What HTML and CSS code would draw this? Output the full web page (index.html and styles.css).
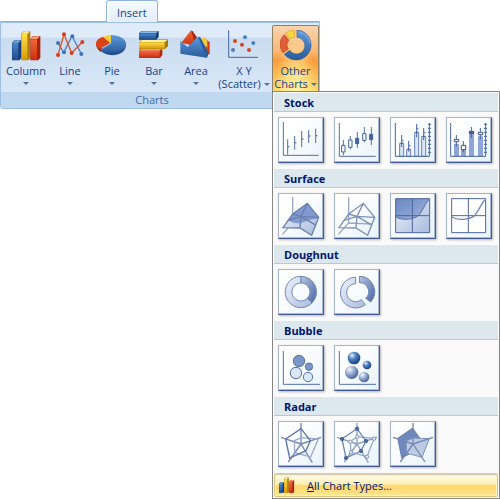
FILE: index.html
```
<!DOCTYPE html>
<html lang="en">
<head>
<meta charset="utf-8">
<title>Insert chart</title>
<link rel="stylesheet" href="styles.css">
</head>
<body>
<svg class="defs" aria-hidden="true">
  <defs>
    <linearGradient id="blue" x1="0" y1="0" x2="0" y2="1"><stop offset="0" stop-color="#4a86cc"/><stop offset="1" stop-color="#1d4c8c"/></linearGradient>
    <linearGradient id="area" x1="0" y1="0" x2="0" y2="1"><stop offset="0" stop-color="#5d9bdd"/><stop offset="1" stop-color="#2a5c9c"/></linearGradient>
    <linearGradient id="yellow" x1="0" y1="0" x2="0" y2="1"><stop offset="0" stop-color="#ffdf4a"/><stop offset="1" stop-color="#d49a0c"/></linearGradient>
    <linearGradient id="red" x1="0" y1="0" x2="0" y2="1"><stop offset="0" stop-color="#f2663a"/><stop offset="1" stop-color="#c9300e"/></linearGradient>
    <linearGradient id="pale" x1="0" y1="0" x2="1" y2="1"><stop offset="0" stop-color="#eef3fb"/><stop offset="1" stop-color="#a9bbdc"/></linearGradient>
    <linearGradient id="mid" x1="0" y1="0" x2="1" y2="1"><stop offset="0" stop-color="#6a88c2"/><stop offset="1" stop-color="#9fb2dc"/></linearGradient>
    <linearGradient id="deep" x1="0" y1="0" x2="1" y2="1"><stop offset="0" stop-color="#b4c4e2"/><stop offset="1" stop-color="#4a66a2"/></linearGradient>
    <radialGradient id="ball" cx=".35" cy=".3" r=".75"><stop offset="0" stop-color="#e8f1fb"/><stop offset=".4" stop-color="#4f83c2"/><stop offset="1" stop-color="#123a7c"/></radialGradient>
    <radialGradient id="ball-pale" cx=".35" cy=".3" r=".75"><stop offset="0" stop-color="#f4f8fd"/><stop offset=".5" stop-color="#8fa6cc"/><stop offset="1" stop-color="#3d5c94"/></radialGradient>
    <symbol id="columns" viewBox="30 90 96 96">
      <path d="M36 128l8-8h20v54l-6 7H36z" fill="#173d78"/><path d="M37 129h18v51H37z" fill="url(#blue)"/><path d="M37 128l8-7h18l-7 7z" fill="#7badde"/>
      <path d="M64 101l8-8h19v81l-7 7H64z" fill="#b47c08"/><path d="M65 102h17v78H65z" fill="url(#yellow)"/><path d="M65 101l8-7h17l-7 7z" fill="#fff09a"/>
      <path d="M91 117l8-9h22v66l-7 7H91z" fill="#a9210b"/><path d="M92 118h19v62H92z" fill="url(#red)"/><path d="M92 117l8-8h20l-8 8z" fill="#ff9b74"/>
    </symbol>
  </defs>
</svg>

<header class="ribbon">
  <nav class="tabs"><a class="tab" href="#charts">Insert</a></nav>
  <section class="group" id="charts" aria-labelledby="group-name">
    <div class="tools">
      <button class="tool" type="button">
        <svg class="icon"><use href="#columns"/></svg>
        <span class="label">Column</span><span class="arrow"></span>
      </button>
      <button class="tool" type="button">
        <svg class="icon" viewBox="162 90 96 96">
          <path d="M174 129l17 29 25-50 28 54" fill="none" stroke="#4f80ba" stroke-width="4"/>
          <g fill="#3f74b5"><circle cx="174" cy="129" r="6"/><circle cx="192" cy="157" r="6"/><circle cx="217" cy="109" r="6"/><circle cx="244" cy="162" r="6"/></g>
          <path d="M174 165l18-62 23 56 32-33" fill="none" stroke="#d9512f" stroke-width="4"/>
          <g fill="#d63d18"><circle cx="174" cy="165" r="6"/><circle cx="192" cy="103" r="6"/><circle cx="215" cy="159" r="6"/><circle cx="247" cy="126" r="6"/></g>
        </svg>
        <span class="label">Line</span><span class="arrow"></span>
      </button>
      <button class="tool" type="button">
        <svg class="icon" viewBox="288 90 96 96">
          <path d="M301 148c8 24 74 27 77-12v-6l-74 17z" fill="#23508e"/><path d="M288 130c0 12 5 20 15 26l6-10z" fill="#941d08"/>
          <path d="M333 130l-32 18c18 17 77 12 77-16 0-17-22-26-45-27z" fill="url(#area)"/>
          <path d="M331 129l-22-19c-25 8-27 25-11 37z" fill="#dc4319"/><path d="M333 128l-23-18c7-3 14-5 23-5z" fill="#f6cd35"/>
          <path d="M302 149l31-19" stroke="#86b5e7" stroke-width="2"/>
        </svg>
        <span class="label">Pie</span><span class="arrow"></span>
      </button>
      <button class="tool" type="button">
        <svg class="icon" viewBox="414 90 96 96">
          <path d="M417 152l7-7h63v20l-7 9h-63z" fill="#a92810"/><path d="M417 153h62v20h-62z" fill="url(#red)"/><path d="M418 152l7-6h61l-7 6z" fill="#ff9b74"/>
          <path d="M417 126l9-8h78v20l-9 9h-78z" fill="#a87508"/><path d="M417 127h77v19h-77z" fill="url(#yellow)"/><path d="M418 126l9-7h76l-9 7z" fill="#fff09a"/>
          <path d="M417 100l7-7h52v18l-7 8h-52z" fill="#173d78"/><path d="M417 101h51v17h-51z" fill="url(#blue)"/><path d="M418 100l7-6h50l-7 6z" fill="#8bbbe8"/>
        </svg>
        <span class="label">Bar</span><span class="arrow"></span>
      </button>
      <button class="tool" type="button">
        <svg class="icon" viewBox="60 90 96 96">
          <path d="M64 128l29-37 24 50z" fill="url(#red)"/><path d="M93 91l5 3 13 18-8 12z" fill="#a92a10"/>
          <path d="M130 112l13 10 6 4v36l-6 2z" fill="#d43b15"/><path d="M122 120l8-9 12 12v20z" fill="#f6cd35"/>
          <path d="M61 122l22 19 31-31 31 49-5 14-79-12z" fill="url(#area)"/><path d="M114 110l7 2 25 47-5 15z" fill="#2b5c9c"/>
        </svg>
        <span class="label">Area</span><span class="arrow"></span>
      </button>
      <button class="tool" type="button">
        <svg class="icon" viewBox="204 90 96 96">
          <path d="M206 91v81h88" fill="none" stroke="#47679a" stroke-width="3"/>
          <g fill="#4c80bc"><circle cx="219" cy="150" r="6"/><circle cx="255" cy="112" r="6"/><circle cx="280" cy="129" r="6"/></g>
          <g fill="#d8441f"><circle cx="225" cy="123" r="6"/><circle cx="246" cy="134" r="6"/><circle cx="267" cy="150" r="6"/></g>
        </svg>
        <span class="label">X Y</span><span class="label">(Scatter) <span class="arrow"></span></span>
      </button>
      <div class="picker">
        <button class="tool open" type="button" aria-expanded="true" aria-controls="chart-menu">
          <svg class="icon" viewBox="357 87 96 96">
            <path d="M408 87a45 45 0 1 1-38 73l16-12a25 25 0 1 0 22-39z" fill="url(#area)" stroke="#315f9d" stroke-width="2"/>
            <path d="M370 101l14 17c-7 8-8 17-2 26l-16 11c-13-18-12-38 4-54z" fill="#df5e38" stroke="#c3411d" stroke-width="2"/>
            <path d="M374 97c8-6 16-9 26-10v22c-5 0-9 2-13 5z" fill="#f9d742" stroke="#d7a81c" stroke-width="2"/>
            <path d="M412 93a39 39 0 0 1 35 35" fill="none" stroke="#7baadf" stroke-width="4"/>
          </svg>
          <span class="label">Other</span><span class="label">Charts <span class="arrow"></span></span>
        </button>
        <div class="menu" id="chart-menu">
          <h2>Stock</h2>
          <div class="gallery">
            <button class="thumb" type="button" aria-label="High-Low-Close"><svg viewBox="33 90 132 132"><g fill="none" stroke="#566f9f" stroke-width="3"><path d="M46 102v100h106M59 154v46M80 144v41M101 129v48M122 126v39M143 122v43"/><path d="M60 176h4M81 164h4M102 153h4M123 144h4M144 143h4" stroke-width="4"/></g></svg></button>
            <button class="thumb" type="button" aria-label="Open-High-Low-Close"><svg viewBox="201 90 132 132"><path d="M214 105v100h109M226 156v46M247 144v40M268 132v48M289 117v46M310 117v54" fill="none" stroke="#566f9f" stroke-width="3"/><g fill="#fff" stroke="#3e6498" stroke-width="3"><path d="M221 172h10v20h-10zM242 156h10v22h-10zM284 137h10v20h-10z"/><path d="M263 151h9v16h-9zM305 139h9v16h-9z" fill="#49609c"/></g></svg></button>
            <button class="thumb" type="button" aria-label="Volume-High-Low-Close"><svg viewBox="33 90 132 132"><g fill="#dbe7f6" stroke="#6681b7" stroke-width="3"><path d="M59 166h12v39H59zM80 184h12v21H80zM104 133h12v72h-12zM125 145h12v60h-12z"/></g><path d="M46 105v100h102V105M65 141v36M86 159v32M110 108v40M131 120v36M144 109h9M144 121h9M144 133h9M144 145h9M144 157h9M144 169h9M144 181h9M144 193h9M62 166h7M83 184h7M107 133h7M128 145h7" fill="none" stroke="#45649f" stroke-width="3"/><path d="M67 158h3M88 173h3M112 122h3M133 134h3" stroke="#45649f" stroke-width="5"/></svg></button>
            <button class="thumb" type="button" aria-label="Volume-Open-High-Low-Close"><svg viewBox="201 90 132 132"><path d="M222 167h15v38h-15zM243 181h15v24h-15zM267 135h15v70h-15zM294 145h15v60h-15z" fill="#8da5d8"/><path d="M212 105v100h105V105M229 141v34M250 159v34M274 117v33M301 120v33M312 109h9M312 121h9M312 133h9M312 145h9M312 157h9M312 169h9M312 181h9M312 193h9" fill="none" stroke="#45649f" stroke-width="3"/><g fill="#fff" stroke="#3d537d" stroke-width="3"><path d="M223 154h13v7h-13zM244 172h13v13h-13zM295 133h13v7h-13z"/><path d="M268 130h13v6h-13z" fill="#49609c"/></g></svg></button>
          </div>
          <h2>Surface</h2>
          <div class="gallery">
            <button class="thumb" type="button" aria-label="3-D Surface"><svg viewBox="33 78 132 132"><path d="M74 87v78l-31 34M74 165l65 3" fill="none" stroke="#9aa9c7" stroke-width="4"/><path d="M45 179l29-41 44-32 34 42-21 54-35-22z" fill="url(#pale)"/><path d="M59 156l15-18 44-32 34 42-6 4c-30 0-50 28-87 4z" fill="#8099d2"/><path d="M45 179l29-41 44-32 34 42-21 54-35-22zM74 138l25 7 19-39M99 145l53 3M99 145l-3 35M99 145l42 25M58 158l41-13" fill="none" stroke="#6b80aa" stroke-width="4"/></svg></button>
            <button class="thumb" type="button" aria-label="Wireframe 3-D Surface"><svg viewBox="201 78 132 132"><path d="M242 87v78l-31 34M242 165l70 3" fill="none" stroke="#9aa9c7" stroke-width="4"/><path d="M213 179l29-41 44-32 34 42-21 54-35-22zM242 138l25 7 19-39M267 145l53 3M267 145l-3 35M267 145l42 25M226 158l41-13" fill="none" stroke="#7d91b9" stroke-width="4"/></svg></button>
            <button class="thumb" type="button" aria-label="Contour"><svg viewBox="33 78 132 132"><path d="M47 92h102v102H47z" fill="url(#pale)"/><path d="M47 92h102v3c-4 2-8 6-12 14l-16 27c-10 18-52 22-74 11z" fill="url(#mid)"/><path d="M47 92h102v102H47zM97 92v102M47 143h102" fill="none" stroke="#4c659b" stroke-width="3"/><path d="M149 95c-4 2-8 6-12 14l-16 27c-10 18-52 24-74 11" fill="none" stroke="#536da4" stroke-width="3"/></svg></button>
            <button class="thumb" type="button" aria-label="Wireframe Contour"><svg viewBox="201 78 132 132"><path d="M215 92h102v102H215z" fill="#fff"/><path d="M215 92h102v102H215zM265 92v102M215 143h102" fill="none" stroke="#4c659b" stroke-width="3"/><path d="M317 95c-4 2-8 6-12 14l-16 27c-10 18-52 24-74 11" fill="none" stroke="#6f88b6" stroke-width="4"/></svg></button>
          </div>
          <h2>Doughnut</h2>
          <div class="gallery">
            <button class="thumb" type="button" aria-label="Doughnut"><svg viewBox="33 72 132 132"><g stroke="#7186b5" stroke-width="3"><path d="M99 91a47 47 0 1 0 33 80l-14-14a27 27 0 1 1-19-46z" fill="url(#pale)"/><path d="M99 91a47 47 0 0 1 33 80l-14-14a27 27 0 0 0-19-46z" fill="url(#deep)"/></g></svg></button>
            <button class="thumb" type="button" aria-label="Exploded Doughnut"><svg viewBox="201 72 132 132"><g stroke="#7186b5" stroke-width="3"><path d="M263 94a46 46 0 1 0 29 82l-12-15a27 27 0 1 1-17-48z" fill="url(#pale)"/><path d="M274 91a46 46 0 0 1 34 77l-15-11a27 27 0 0 0-19-47z" fill="url(#deep)"/></g></svg></button>
          </div>
          <h2>Bubble</h2>
          <div class="gallery">
            <button class="thumb" type="button" aria-label="Bubble"><svg viewBox="33 72 132 132"><path d="M46 87v100h110" fill="none" stroke="#536fa6" stroke-width="3"/><g stroke="#5470a6" stroke-width="3"><circle cx="93" cy="117" r="17" fill="#7d97c8"/><circle cx="123" cy="134" r="11" fill="#7d97c8"/><circle cx="84" cy="153" r="17" fill="#dce7f6"/><circle cx="120" cy="165" r="14" fill="#dce7f6"/></g></svg></button>
            <button class="thumb" type="button" aria-label="3-D Bubble"><svg viewBox="201 72 132 132"><path d="M214 87v100h110" fill="none" stroke="#536fa6" stroke-width="3"/><circle cx="258" cy="108" r="19" fill="url(#ball)"/><circle cx="297" cy="129" r="13" fill="url(#ball)"/><circle cx="251" cy="151" r="20" fill="url(#ball-pale)"/><circle cx="288" cy="165" r="16" fill="url(#ball-pale)"/></svg></button>
          </div>
          <h2>Radar</h2>
          <div class="gallery">
            <button class="thumb" type="button" aria-label="Radar"><svg viewBox="33 72 132 132"><path d="M99 138V75M99 138l60-20M99 138l34 56M99 138l-38 54M99 138l-60-20" fill="none" stroke="#7489b3" stroke-width="4"/><path d="M79 128l21-9 51 4-23 54-48-13z" fill="none" stroke="#9aabd0" stroke-width="4"/><path d="M99 92l28 36-13 30-49 22-12-57z" fill="none" stroke="#5b74a8" stroke-width="4"/></svg></button>
            <button class="thumb" type="button" aria-label="Radar with Markers"><svg viewBox="201 72 132 132"><path d="M267 138V75M267 138l60-20M267 138l34 56M267 138l-38 54M267 138l-60-20" fill="none" stroke="#8c9dc0" stroke-width="4"/><path d="M247 131l21-15 50 6-21 54-48-13z" fill="none" stroke="#9aabd0" stroke-width="4"/><path d="M267 92l27 37-15 30-45 21-12-57z" fill="none" stroke="#7187b5" stroke-width="4"/><g stroke="#48639b" stroke-width="3" fill="#4e6aa5"><circle cx="267" cy="92" r="5"/><circle cx="294" cy="129" r="5"/><circle cx="279" cy="159" r="5"/><circle cx="234" cy="180" r="5"/><circle cx="222" cy="123" r="5"/><g fill="#eef4fc" stroke="#7d91bb"><circle cx="247" cy="131" r="5"/><circle cx="268" cy="116" r="5"/><circle cx="318" cy="122" r="5"/><circle cx="297" cy="176" r="5"/><circle cx="249" cy="163" r="5"/></g></g></svg></button>
            <button class="thumb" type="button" aria-label="Filled Radar"><svg viewBox="33 72 132 132"><path d="M98 90l24 34-15 34-42 22-12-59z" fill="#6f89bd" stroke="#4d69a3" stroke-width="2"/><path d="M79 128l23-8 46 2-22 56-47-13z" fill="#bccae2" stroke="#7d92bd" stroke-width="3"/><path d="M99 138V75M99 138l60-20M99 138l36 54M99 138l-38 54M99 138l-60-20" fill="none" stroke="#7489b3" stroke-width="4"/></svg></button>
          </div>
          <button class="all" type="button"><svg class="small"><use href="#columns"/></svg><span><u>A</u>ll Chart Types...</span></button>
        </div>
      </div>
    </div>
    <div class="caption" id="group-name">Charts</div>
  </section>
</header>
</body>
</html>
```
FILE: styles.css
```
* { box-sizing: border-box; }
body { min-height: 100vh; margin: 0; background: #fff; color: #15428b; font: 11px/13px "Open Sans", "Noto Sans", sans-serif; }
button { margin: 0; padding: 0; border: 0; background: none; color: inherit; font: inherit; }
svg { display: block; }
.defs { position: absolute; width: 0; height: 0; }

.ribbon { width: max-content; }
.tabs { display: flex; padding-left: 106px; border-bottom: 1px solid #8db2e3; }
.tab { height: 22px; margin-bottom: -1px; padding: 5px 10px 0; border: 1px solid #8db2e3; border-bottom: 0; border-radius: 3px 3px 0 0; background: linear-gradient(#f5faff, #e1edfb); box-shadow: inset 0 1px #fff, inset 2px 0 2px #fff; color: inherit; text-decoration: none; }

.group { border: 1px solid #9dbfe5; border-radius: 0 0 3px 3px; background: linear-gradient(#dfebf9 0 14px, #cbdcf0 15px, #d9e7f8 70px); }
.tools { display: grid; grid-template-columns: 44px 44px 40px 44px 40px 56px 47px; padding: 2px 0 0 3px; }
.tool { display: flex; flex-direction: column; align-items: center; width: 100%; height: 67px; padding-top: 5px; }
.icon { width: 32px; height: 32px; margin-bottom: 2px; }
.label { white-space: nowrap; }
.arrow { display: inline-block; border: 3px solid transparent; border-top-color: #4f73a8; border-bottom: 0; }
.tool > .arrow { margin-top: 5px; }
.label .arrow { vertical-align: 2px; }
.open { border: 1px solid #8e8062; border-bottom: 0; border-radius: 2px 2px 0 0; padding-top: 4px; background: radial-gradient(ellipse at 50% 100%, #fff3a0, transparent 65%), linear-gradient(#f8d3ae, #f9b876 38%, #fa9a3a 52%, #fdbd55 75%, #ffdf70); }
.caption { height: 16px; background: #c1d8f1; color: #3e6aaa; text-align: center; padding: 1px 16px 0 0; }

.picker { position: relative; }
.menu { position: absolute; top: 66px; left: 0; width: 228px; padding: 1px; border: 1px solid #868686; background: #fafafa; color: #00156e; }
.menu h2 { height: 19px; margin: 0; padding: 3px 10px 0; border-bottom: 1px solid #c5c5c5; background: #dde7ee; font: inherit; font-weight: 700; }
.gallery { display: grid; grid-template-columns: repeat(4, 46px); gap: 10px; padding: 5px 4px 6px; }
.thumb { height: 46px; border: 1px solid; border-color: #a3b4d0 #42598e #42598e #a3b4d0; background: linear-gradient(135deg, #fff 30%, #e8f2fd); box-shadow: inset -1px -1px #a9bbdc, 1px 1px 2px #b8b8b8; }
.thumb svg { width: 100%; height: 100%; }
.all { display: flex; align-items: center; gap: 12px; width: 100%; height: 24px; padding-left: 3px; border: 1px solid #ddc27a; border-top: 2px solid #d6ccac; border-radius: 2px; background: linear-gradient(#fffce8, #ffeeb0 45%, #ffd767 50%, #ffe493); box-shadow: inset 0 0 0 1px #fff4c5; }
.small { width: 17px; height: 17px; }
```
